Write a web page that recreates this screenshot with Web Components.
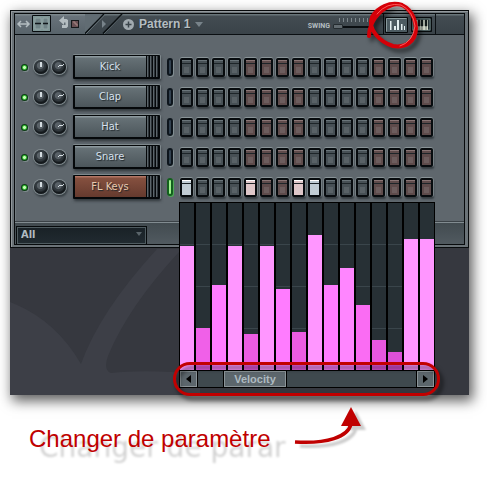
<!DOCTYPE html>
<html lang="fr">
<head>
<meta charset="utf-8">
<title>Changer de paramètre</title>
<style>
body{margin:0;background:#fff;font-family:"Liberation Sans",Arial,sans-serif}
</style>
</head>
<body>
<tutorial-figure></tutorial-figure>
<script>
const define = (name, html, setup) => customElements.define(name, class extends HTMLElement {
  connectedCallback() {
    if (this.shadowRoot) return;
    const t = document.createElement('template');
    t.innerHTML = html;
    this.attachShadow({mode: 'open'}).append(t.content.cloneNode(true));
    if (setup) setup(this, this.shadowRoot);
  }
});

define('step-grid', `
<style>
:host{display:flex;gap:3px}
input{appearance:none;margin:0;width:13px;height:19px;box-sizing:border-box;border:2px solid #070b0e;border-radius:2px;
 box-shadow:0 -1px #8a9498,-1px 0 #747e82,1px 0 #747e82,1px 2px 2px #343b40;
 background:linear-gradient(#cbd2d522,#cbd2d522) 2px 7px/5px 6px no-repeat,
 linear-gradient(var(--hi) 0 1px,var(--mid) 1px 3px,#1d2529 3px 4px,var(--mid) 4px)}
.a{--hi:#697479;--mid:#475055}
.b{--hi:#897575;--mid:#5e4b4b}
.a:checked{--hi:#fff;--mid:#c0ccd4}
.b:checked{--hi:#fff;--mid:#dfc6c8}
</style>`, (host, root) => {
  const on = (host.getAttribute('on') || '').split(',');
  for (let i = 0; i < 16; i++) {
    const s = document.createElement('input');
    s.type = 'checkbox';
    s.className = Math.floor(i / 4) % 2 ? 'b' : 'a';
    s.checked = on.includes(String(i + 1));
    s.setAttribute('aria-label', host.getAttribute('name') + ' ' + (i + 1));
    root.append(s);
  }
});

define('channel-row', `
<style>
:host{display:grid;grid-template-columns:13px 18px 21px 94px 13px auto;align-items:center;justify-content:start;height:30px}
input{appearance:none;margin:0}
.led{width:7px;height:7px;border-radius:50%;background:radial-gradient(#c8ffb8 0 1px,#35ba35 2px,#0a3b12 3px);box-shadow:1px 1px #7f8b8d}
.knob{width:14px;height:14px;border-radius:50%;box-shadow:0 0 0 1px #858f93,1px 2px 2px 1px #394146;
 background:linear-gradient(#d4dce0,#d4dce0) 6px 2px/2px 5px no-repeat,radial-gradient(circle at 45% 40%,#596167 0 3px,#31383d 4px 5px,#14191c 7px)}
.knob.vol{background:linear-gradient(165deg,#0000 42%,#d4dce0 43% 57%,#0000 58%) 6px 3px/6px 5px no-repeat,radial-gradient(circle at 45% 40%,#596167 0 3px,#31383d 4px 5px,#14191c 7px)}
input::-webkit-slider-thumb{appearance:none;width:1px;height:1px}
button{--stripes:repeating-linear-gradient(90deg,#05080a 0 1px,#5c656a 1px 2px,#2d3439 2px 3px) right/13px 100% no-repeat;
 width:87px;height:24px;box-sizing:border-box;padding:0 14px 0 0;border:1px solid #05080a;border-width:1px 1px 2px 2px;border-radius:1px;
 color:#d6e0ec;font:11px/20px "DejaVu Sans Condensed","DejaVu Sans",sans-serif;text-align:center;text-shadow:1px 1px 1px #20282c;
 box-shadow:0 -1px #7e888c,1px 0 #7e888c,1px 2px 3px #30373b;
 background:var(--stripes),linear-gradient(#8d999e 0 1px,#667176 2px,#4c565b)}
:host([selected]) button{color:#eac9ae;background:var(--stripes),linear-gradient(#b17564 0 1px,#85503f 2px,#653a2e)}
.sel{width:6px;height:18px;border-radius:3px;box-sizing:border-box;border:2px solid #0d151c;background:#334250;box-shadow:1px 1px #818d91}
:host([selected]) .sel{border-color:#12601c;background:#9df08c;box-shadow:1px 1px #4fa957}
</style>
<input class="led" type="checkbox" checked aria-label="Mute">
<input class="knob" type="range" aria-label="Pan">
<input class="knob vol" type="range" aria-label="Volume">
<button type="button"><slot></slot></button>
<input class="sel" type="radio" aria-label="Select">`, (host, root) => {
  const g = document.createElement('step-grid');
  g.setAttribute('name', host.textContent);
  g.setAttribute('on', host.getAttribute('on') || '');
  root.append(g);
});

define('title-bar', `
<style>
:host{display:flex;height:21px;box-sizing:border-box;border-bottom:1px solid #0a0f12;background:linear-gradient(#69757a 0 1px,#434c52 2px,#3a4349);color:#b4bdc1}
button{margin:0;padding:0;border:0;background:none;color:inherit;display:block;line-height:0}
.tools{display:flex;align-items:center;background:linear-gradient(#7c878c 0 1px,#68727a 2px,#58636a);width:70px;height:20px}
.pattern{display:flex;align-items:center;gap:5px;font:bold 12px/18px "Liberation Sans",Arial,sans-serif;text-shadow:1px 1px #252d32}
.space{flex:1}
.swing{display:flex;align-items:center;gap:3px;height:20px;font:bold 7px/10px Roboto,"Liberation Sans",sans-serif;margin-right:13px;padding-top:3px;box-sizing:border-box}
.swing input{appearance:none;margin:0;width:37px;height:16px;background:repeating-linear-gradient(90deg,#7d878c 0 1px,#0000 1px 4px) 6px 0/31px 4px no-repeat,linear-gradient(#0a0e11,#0a0e11) 0 8px/37px 2px no-repeat}
.swing input::-webkit-slider-thumb{appearance:none;width:10px;height:5px;margin-top:2px;border-radius:1px;background:#626b70;border:1px solid #252c30}
.views{display:flex;gap:3px;padding:2px 2px 0 1px;border:solid #0a0f12;border-width:0 1px;margin-right:28px}
</style>
<div class="tools">
 <button aria-label="Options"><svg width="17" height="20"><path d="M4 10H13M6 7 3 10l3 3M11 7l3 3-3 3" fill="none" stroke="#b4bdc1" stroke-width="1.500"/></svg></button>
 <button aria-label="Display"><svg width="20" height="20"><path d="M.5 1.5h18v16H.5z" fill="#7f9696" stroke="#080c0f"/><path d="M3 4h6v11H3zM11 4h5v11h-5z" fill="#708487" stroke="#91a3a3"/><path d="M3 9.5h6M11 9.5h5" stroke="#10171a" stroke-width="1.5"/></svg></button>
 <button aria-label="Undo"><svg width="31" height="20"><path d="M12 5v-3L7 6.500 12 11V8.500h1.500V11H10v3h4.500l1.500-1.500V6L14.500 5z" fill="#b4bdc1"/><rect x="19.500" y="6.500" width="7" height="7" fill="#695054" stroke="#15191b"/><path d="M21 8h2v2h2v2" stroke="#a78783" fill="none"/></svg></button>
</div>
<svg width="38" height="20" aria-hidden="true"><path d="M0 0H19L0 19z" fill="#616c73"/><path d="M0 19.500 19 0" stroke="#0b1013" stroke-width="1.5"/><path d="M1 20 20.500 0M19 20 38 0" stroke="#68747a"/><path d="M18 19.500 37 0" stroke="#0b1013" stroke-width="1.500"/><path d="m17 6 4 4-4 4z" fill="#78838a"/></svg>
<button class="pattern" type="button"><svg width="11" height="11"><circle cx="5.500" cy="5.500" r="5.500" fill="#a2abb0"/><path d="M2.500 5.500h6M5.500 2.500v6" stroke="#3b454b" stroke-width="1.500"/></svg><span>Pattern 1</span><svg width="9" height="5"><path d="M0 0h8L4 5z" fill="#78838a"/></svg></button>
<span class="space"></span>
<label class="swing">SWING<input type="range" value="0"></label>
<div class="views">
 <button aria-label="Graph editor"><svg width="23" height="16"><path d="M.5.500h22v15H.5z" fill="#4c5b61" stroke="#070b0d"/><path d="M1.500 14.500v-13h20" stroke="#8a9b9e" fill="none"/><path d="M5 4v9h1.500V4M9 9v4h2V9zM12 3v10h2V3zM16 7v6h1.500V7zM19 9v4h1V9z" fill="#e3eff0"/></svg></button>
 <button aria-label="Keyboard editor"><svg width="22" height="16"><path d="M.5.500h20v14H.5z" fill="#263236" stroke="#070b0d"/><path d="M2 2h17v11H2z" fill="none" stroke="#6f8482"/><path d="M5 3h12v10H5z" fill="#d1d9ca"/><path d="M7 3h2v6H7zM10 3h2v6h-2zM14 3h2v6h-2zM8 9v4M11 9v4M15 9v4" fill="#10181a" stroke="#10181a" stroke-width=".5"/></svg></button>
</div>`);

define('step-sequencer', `
<style>
:host{display:block;border:1px solid #080b0d;background:#6b7378;padding:2px 3px;box-shadow:inset 1px 1px #93999d;position:relative}
.in{border:1px solid #080b0d;background:#5f676d;box-shadow:inset 1px 0 #737c81}
.rows{padding:17px 0 19px 6px}
.foot{display:flex;height:23px;box-sizing:border-box;border-top:1px solid #3b4247;box-shadow:inset 0 1px #818b90;background:linear-gradient(#414a4f,#515a60);padding:2px 0 0 1px}
select{appearance:none;margin:0;width:131px;height:19px;border:1px solid #060a0c;outline:1px solid #4f5b60;outline-offset:-2px;padding:0 4px;border-radius:0;background:linear-gradient(#192126,#212b31);color:#b1bbc0;font:bold 11px/14px "DejaVu Sans Condensed","DejaVu Sans",sans-serif}
.pick{position:relative;height:19px}
.pick svg{position:absolute;right:5px;top:8px}
</style>
<div class="in">
<title-bar></title-bar>
<div class="rows">
<channel-row>Kick</channel-row><channel-row>Clap</channel-row><channel-row>Hat</channel-row><channel-row>Snare</channel-row>
<channel-row selected on="1,5,8,9">FL Keys</channel-row>
</div>
<div class="foot"><span class="pick"><select aria-label="Group"><option>All</option></select><svg width="6" height="4"><path d="M0 0h6L3 4z" fill="#59646a"/></svg></span></div>
</div>`);

define('velocity-panel', `
<style>
:host{display:block;width:256px;box-sizing:border-box;background:#000;padding:1px 1px 0;position:relative}
.graph{display:flex;gap:2px;align-items:stretch;height:167px}
.col{flex:1;display:flex;align-items:flex-end;background:linear-gradient(#3a454b,#3a454b) 0 41px/100% 1px no-repeat,linear-gradient(#3a454b,#3a454b) 0 83px/100% 1px no-repeat,linear-gradient(#3a454b,#3a454b) 0 125px/100% 1px no-repeat,#273035}
.col i{flex:1}
.bar{display:flex;justify-content:space-between;height:18px;box-sizing:border-box;border:solid #000;border-width:1px 0;background:#3f494e}
button{box-sizing:border-box;margin:0;padding:0;border:1px solid #8b9498;background:#5c666c;color:#bdc7cc;font:11px/14px "Liberation Sans",Arial,sans-serif;width:17px;outline:1px solid #000}
.track{flex:1;padding-left:27px;display:flex}
.thumb{width:62px;font-weight:bold;color:#aebac0}
svg{display:block;margin:auto}
.ring{position:absolute;left:-6px;right:-5px;bottom:-8px;height:34px;box-sizing:border-box;border:3px solid #c20000;border-radius:17px/17px;filter:drop-shadow(3px 4px 2px #0009);pointer-events:none}
</style>
<div class="graph" role="img" aria-label="Velocity"></div>
<div class="bar"><button aria-label="Précédent"><svg width="5" height="8"><path d="M5 0v8L0 4z"/></svg></button><div class="track"><button class="thumb">Velocity</button></div><button aria-label="Suivant"><svg width="5" height="8"><path d="M0 0v8l5-4z"/></svg></button></div>
<div class="ring"></div>`, (host, root) => {
  const g = root.querySelector('.graph');
  for (const v of [124,42,85,124,36,124,81,38,135,85,102,65,30,18,131,131]) {
    const c = document.createElement('div'), b = document.createElement('i');
    c.className = 'col';
    b.style.height = v + 'px';
    b.style.background = v > 120 ? '#ff96ff' : v > 100 ? '#ff86ff' : v > 75 ? '#ff7cff' : v > 60 ? '#fa6cf3' : v > 40 ? '#f060e8' : v > 35 ? '#ec5ce2' : v > 20 ? '#e757df' : '#dc50d8';
    c.append(b);
    g.append(c);
  }
});

define('tutorial-figure', `
<style>
:host{display:block;padding:10px 18px 0 10px}
.desk{position:relative;background:#36383f;padding-bottom:7px;box-shadow:3px 5px 12px 1px #000000a0}
.wall{position:absolute;left:0;bottom:0;width:100%;height:146px}
velocity-panel{margin:-46px 0 0 169px}
.circle{position:absolute;right:44px;top:-10px;overflow:visible;filter:drop-shadow(3px 4px 2px #0008)}
.note{display:flex;align-items:flex-start;position:relative;padding:12px 0 32px 19px;gap:24px}
.label{font-size:24px;line-height:28px;color:#c00000;margin-top:18px;position:relative;white-space:nowrap}
.label::after{content:"Changer de parar";position:absolute;z-index:-1;left:10px;top:6px;font:28px/34px "DejaVu Sans",sans-serif;color:#0000002e;filter:blur(1px)}
.arrow{overflow:visible;filter:drop-shadow(5px 4px 1px #0003)}
</style>
<div class="desk">
<svg class="wall" viewBox="0 0 459 146" preserveAspectRatio="xMinYMax slice" aria-hidden="true"><path d="M0 53Q45 70 71 115Q90 62 147 0H169V3Q118 58 98 107Q93 121 101 124Q135 120 190 125V146H0z" fill="#3d3f47"/></svg>
<step-sequencer></step-sequencer>
<velocity-panel></velocity-panel>
<svg class="circle" width="60" height="60" aria-hidden="true"><g fill="none" stroke-linecap="round"><path d="M4 36C4 25 12 10 27 5C41 1 50 15 51 28C51 42 40 48 28 46C15 42 2 29 7 17C12 8 25 1 37 5" stroke="#d50008" stroke-width="4"/><path d="M12 14Q22 2 36 5Q48 11 50 26Q48 42 35 46" stroke="#ff5a5a" stroke-width="1"/></g></svg>
</div>
<div class="note"><span class="label">Changer de paramètre</span>
<svg class="arrow" width="68" height="40" aria-hidden="true"><path d="M1 35C33 37 54 30 57 17" fill="none" stroke="#c00000" stroke-width="3.500"/><path d="M57 0 67 19H47z" fill="#c00000"/></svg></div>`);
</script>
</body>
</html>
